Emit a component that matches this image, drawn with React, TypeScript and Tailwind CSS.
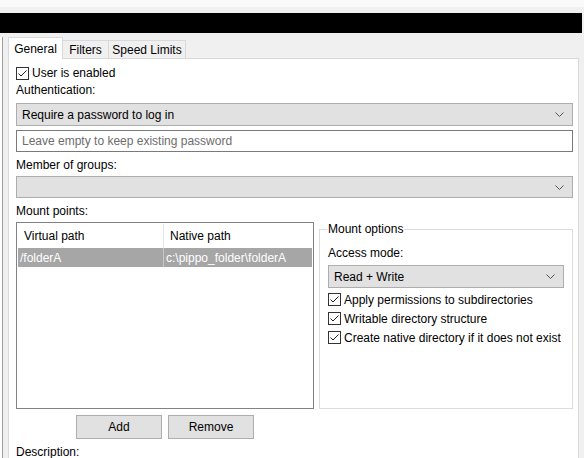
import React from "react";

function CheckBox({ label }: { label: string }) {
  return (
    <div className="flex items-center h-[19px]">
      <span className="w-[13px] h-[13px] border border-[#333333] bg-white flex items-center justify-center shrink-0">
        <svg width="11" height="11" viewBox="0 0 11 11">
          <path d="M1.5 5.5 L4 8 L9.5 2.5" fill="none" stroke="#222" strokeWidth="1" />
        </svg>
      </span>
      <span className="ml-[3px]">{label}</span>
    </div>
  );
}

function Chevron() {
  return (
    <svg width="9" height="5" viewBox="0 0 9 5" className="shrink-0">
      <path d="M0.5 0.5 L4.5 4.5 L8.5 0.5" fill="none" stroke="#555" strokeWidth="1" />
    </svg>
  );
}

function Select({ value, className }: { value?: string; className?: string }) {
  return (
    <div
      className={
        "flex items-center justify-between border border-[#adadad] bg-[#e1e1e1] pl-[5px] pr-[8px] " +
        (className ?? "")
      }
    >
      <span>{value ?? ""}</span>
      <Chevron />
    </div>
  );
}

export default function App() {
  return (
    <div
      className="w-[584px] h-[458px] overflow-hidden bg-[#f0f0f0] flex flex-col text-[12px] text-black leading-[16px]"
      style={{ fontFamily: '"Liberation Sans", Arial, sans-serif' }}
    >
      <div className="h-[7px] bg-[#fafafa]" />
      <div className="h-[6px] bg-[#f0f0f0]" />
      <div className="h-[20px] w-[582px] bg-black" />

      <div className="flex flex-1 min-h-0">
        {/* left pane edge */}
        <div className="w-[3px] mt-[4px] bg-white border-r border-[#a0a0a0]" />

        {/* tab control */}
        <div className="ml-[5px] mt-[4px] w-[571px] flex flex-col">
          <div className="flex items-end h-[22px]">
            <div className="h-[22px] w-[55px] bg-white border border-[#d9d9d9] border-b-0 flex items-center justify-center relative z-10">
              General
            </div>
            <div className="h-[19px] w-[46px] border border-[#d9d9d9] border-l-0 border-b-0 flex items-center justify-center">
              Filters
            </div>
            <div className="h-[19px] w-[77px] border border-[#d9d9d9] border-l-0 border-b-0 flex items-center justify-center">
              Speed Limits
            </div>
          </div>

          <div className="flex-1 bg-white border border-[#d9d9d9] -mt-[1px] pl-[7px] pr-[5px] pt-[7px] flex flex-col">
            <div className="h-[14px] flex items-center">
              <CheckBox label="User is enabled" />
            </div>
            <div className="mt-[2px] h-[16px] flex items-center">Authentication:</div>
            <Select value="Require a password to log in" className="mt-[5px] h-[23px]" />
            <div className="mt-[4px] h-[22px] border border-[#7a7a7a] bg-white flex items-center pl-[5px] text-[#6d6d6d]">
              Leave empty to keep existing password
            </div>
            <div className="mt-[5px] h-[16px] flex items-center">Member of groups:</div>
            <Select className="mt-[3px] h-[22px]" />
            <div className="mt-[5px] h-[16px] flex items-center">Mount points:</div>

            <div className="mt-[3px] flex gap-[5px]">
              {/* mount list */}
              <div className="w-[298px] h-[187px] border border-[#828282] bg-white p-[1px] flex flex-col">
                <div className="h-[24px] flex">
                  <div className="w-[146px] border-r border-[#e5e5e5] pl-[6px] flex items-center">
                    Virtual path
                  </div>
                  <div className="flex-1 pl-[6px] flex items-center">Native path</div>
                </div>
                <div className="h-[19px] flex bg-[#a6a6a6] text-white">
                  <div className="w-[146px] border-r border-[#c8c8c8] pl-[2px] flex items-center">
                    /folderA
                  </div>
                  <div className="flex-1 pl-[2px] flex items-center">c:\pippo_folder\folderA</div>
                </div>
              </div>

              {/* mount options */}
              <div className="relative mt-[7px] w-[254px] h-[180px] border border-[#dcdcdc] pl-[8px] pr-[8px] pt-[15px]">
                <span className="absolute left-[7px] -top-[9px] bg-white px-[1px]">Mount options</span>
                <div className="h-[16px] flex items-center">Access mode:</div>
                <Select value="Read + Write" className="mt-[4px] h-[23px]" />
                <div className="mt-[2px] flex flex-col">
                  <CheckBox label="Apply permissions to subdirectories" />
                  <CheckBox label="Writable directory structure" />
                  <CheckBox label="Create native directory if it does not exist" />
                </div>
              </div>
            </div>

            <div className="w-[298px] mt-[6px] flex justify-center gap-[6px]">
              <div className="w-[86px] h-[24px] border border-[#adadad] bg-[#e1e1e1] flex items-center justify-center">
                Add
              </div>
              <div className="w-[86px] h-[24px] border border-[#adadad] bg-[#e1e1e1] flex items-center justify-center">
                Remove
              </div>
            </div>
            <div className="mt-[5px] h-[16px] flex items-center">Description:</div>
          </div>
        </div>
      </div>
    </div>
  );
}
